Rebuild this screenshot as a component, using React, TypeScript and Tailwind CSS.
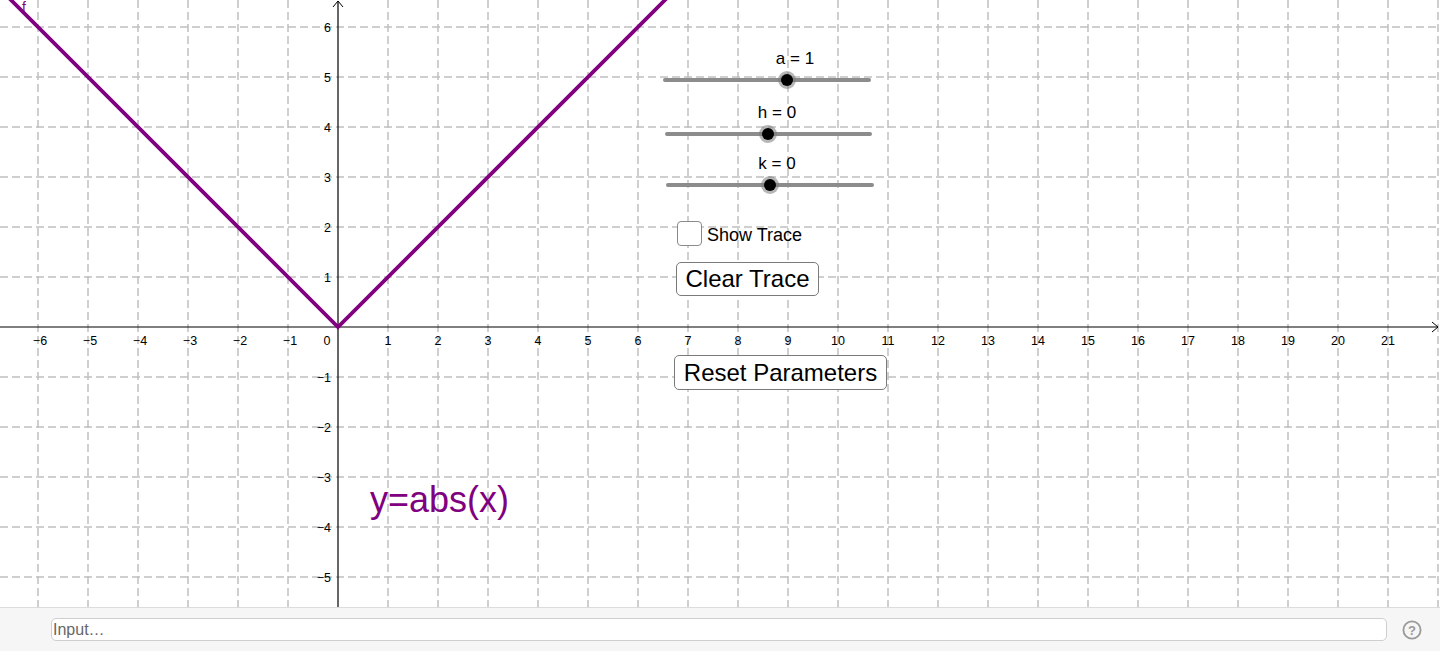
import React from "react";

const O = { x: 338, y: 327 };
const U = 50;
const W = 1440;
const H = 607;

function Graph() {
  const vx: number[] = [];
  for (let x = O.x - 6 * U; x <= W; x += U) if (x !== O.x) vx.push(x);
  const hy: number[] = [];
  for (let y = O.y - 6 * U; y <= H; y += U) if (y !== O.y) hy.push(y);
  const xl: number[] = [];
  for (let i = -6; i <= 21; i++) if (i !== 0) xl.push(i);
  const yl: number[] = [];
  for (let i = -5; i <= 6; i++) if (i !== 0) yl.push(i);
  const fmt = (n: number) => (n < 0 ? "\u2212" + Math.abs(n) : String(n));
  return (
    <svg width={W} height={H} className="block" style={{ fontFamily: '"Liberation Sans", Arial, sans-serif' }}>
      {vx.map((x) => (
        <line key={"v" + x} x1={x} y1={0} x2={x} y2={H} stroke="#c0c0c0" strokeWidth={1.5} strokeDasharray="8 4" />
      ))}
      {hy.map((y) => (
        <line key={"h" + y} x1={0} y1={y} x2={W} y2={y} stroke="#c0c0c0" strokeWidth={1.5} strokeDasharray="8 4" />
      ))}
      {/* axes */}
      <line x1={0} y1={O.y} x2={1438} y2={O.y} stroke="#000" strokeWidth={1.2} />
      <polyline points="1432,322 1438,327 1432,332" fill="none" stroke="#000" strokeWidth={1} />
      <line x1={O.x} y1={1} x2={O.x} y2={H} stroke="#000" strokeWidth={1.2} />
      <polyline points="333,7 338,1 343,7" fill="none" stroke="#000" strokeWidth={1} />
      {xl.map((i) => (
        <text key={"xl" + i} x={O.x + i * U + (i < 0 ? 2 : 0)} y={345} fontSize={12.5} textAnchor="middle" fill="#000">
          {fmt(i)}
        </text>
      ))}
      <text x={327} y={345} fontSize={12.5} textAnchor="middle" fill="#000">0</text>
      {yl.map((i) => (
        <text key={"yl" + i} x={331} y={O.y - i * U + 4.5} fontSize={12.5} textAnchor="end" fill="#000">
          {fmt(i)}
        </text>
      ))}
      {/* function */}
      <polyline points={`${O.x - 340},${O.y - 340} ${O.x},${O.y} ${O.x + 340},${O.y - 340}`} fill="none" stroke="#800080" strokeWidth={3.8} strokeLinejoin="miter" />
      <text x={22} y={12} fontSize={14} fill="#800080">f</text>
      <text x={370} y={512} fontSize={36} fill="#800080">y=abs(x)</text>
      {/* sliders */}
      {[
        { x1: 665, x2: 869, y: 80, k: 787, label: "a = 1", lx: 795 },
        { x1: 667, x2: 870, y: 134, k: 768, label: "h = 0", lx: 777 },
        { x1: 668, x2: 872, y: 185, k: 770, label: "k = 0", lx: 777 },
      ].map((s) => (
        <g key={s.label}>
          <line x1={s.x1} y1={s.y} x2={s.x2} y2={s.y} stroke="#8c8c8c" strokeWidth={4} strokeLinecap="round" />
          <circle cx={s.k} cy={s.y} r={9} fill="#7a7a7a" opacity={0.55} />
          <circle cx={s.k} cy={s.y} r={6} fill="#000" />
          <text x={s.lx} y={s.y - 16} fontSize={17} textAnchor="middle" fill="#000">{s.label}</text>
        </g>
      ))}
    </svg>
  );
}

export default function App() {
  return (
    <div className="w-[1440px] h-[651px] flex flex-col bg-white overflow-hidden" style={{ fontFamily: '"Liberation Sans", Arial, sans-serif' }}>
      <div className="relative h-[607px] shrink-0">
        <Graph />
        <div className="absolute left-[677px] top-[221px] flex items-center gap-[5px]">
          <div className="w-[25px] h-[25px] rounded-[4px] border border-[#8a8a8a] bg-white" />
          <span className="text-[18px] leading-none text-black mt-[2px]">Show Trace</span>
        </div>
        <button className="absolute left-[676px] top-[262px] w-[143px] h-[34px] rounded-[5px] border border-[#7a7a7a] bg-white text-[24px] leading-none text-black flex items-center justify-center">
          Clear Trace
        </button>
        <button className="absolute left-[674px] top-[355px] w-[213px] h-[35px] rounded-[5px] border border-[#7a7a7a] bg-white text-[24px] leading-none text-black flex items-center justify-center">
          Reset Parameters
        </button>
      </div>
      <div className="flex-1 flex items-center border-t border-[#dcdcdc] bg-[#f6f6f6] pl-[51px] pr-[18px] gap-[15px]">
        <div className="flex-1 h-[23px] rounded-[5px] border border-[#cfcfcf] bg-white flex items-center pl-[1px]">
          <span className="text-[16px] leading-none text-[#666]">Input…</span>
        </div>
        <svg width="20" height="20" viewBox="0 0 20 20">
          <circle cx="10" cy="10" r="8.6" fill="none" stroke="#999" strokeWidth="1.8" />
          <text x="10" y="15" fontSize="13" fontWeight="bold" textAnchor="middle" fill="#999">?</text>
        </svg>
      </div>
    </div>
  );
}
